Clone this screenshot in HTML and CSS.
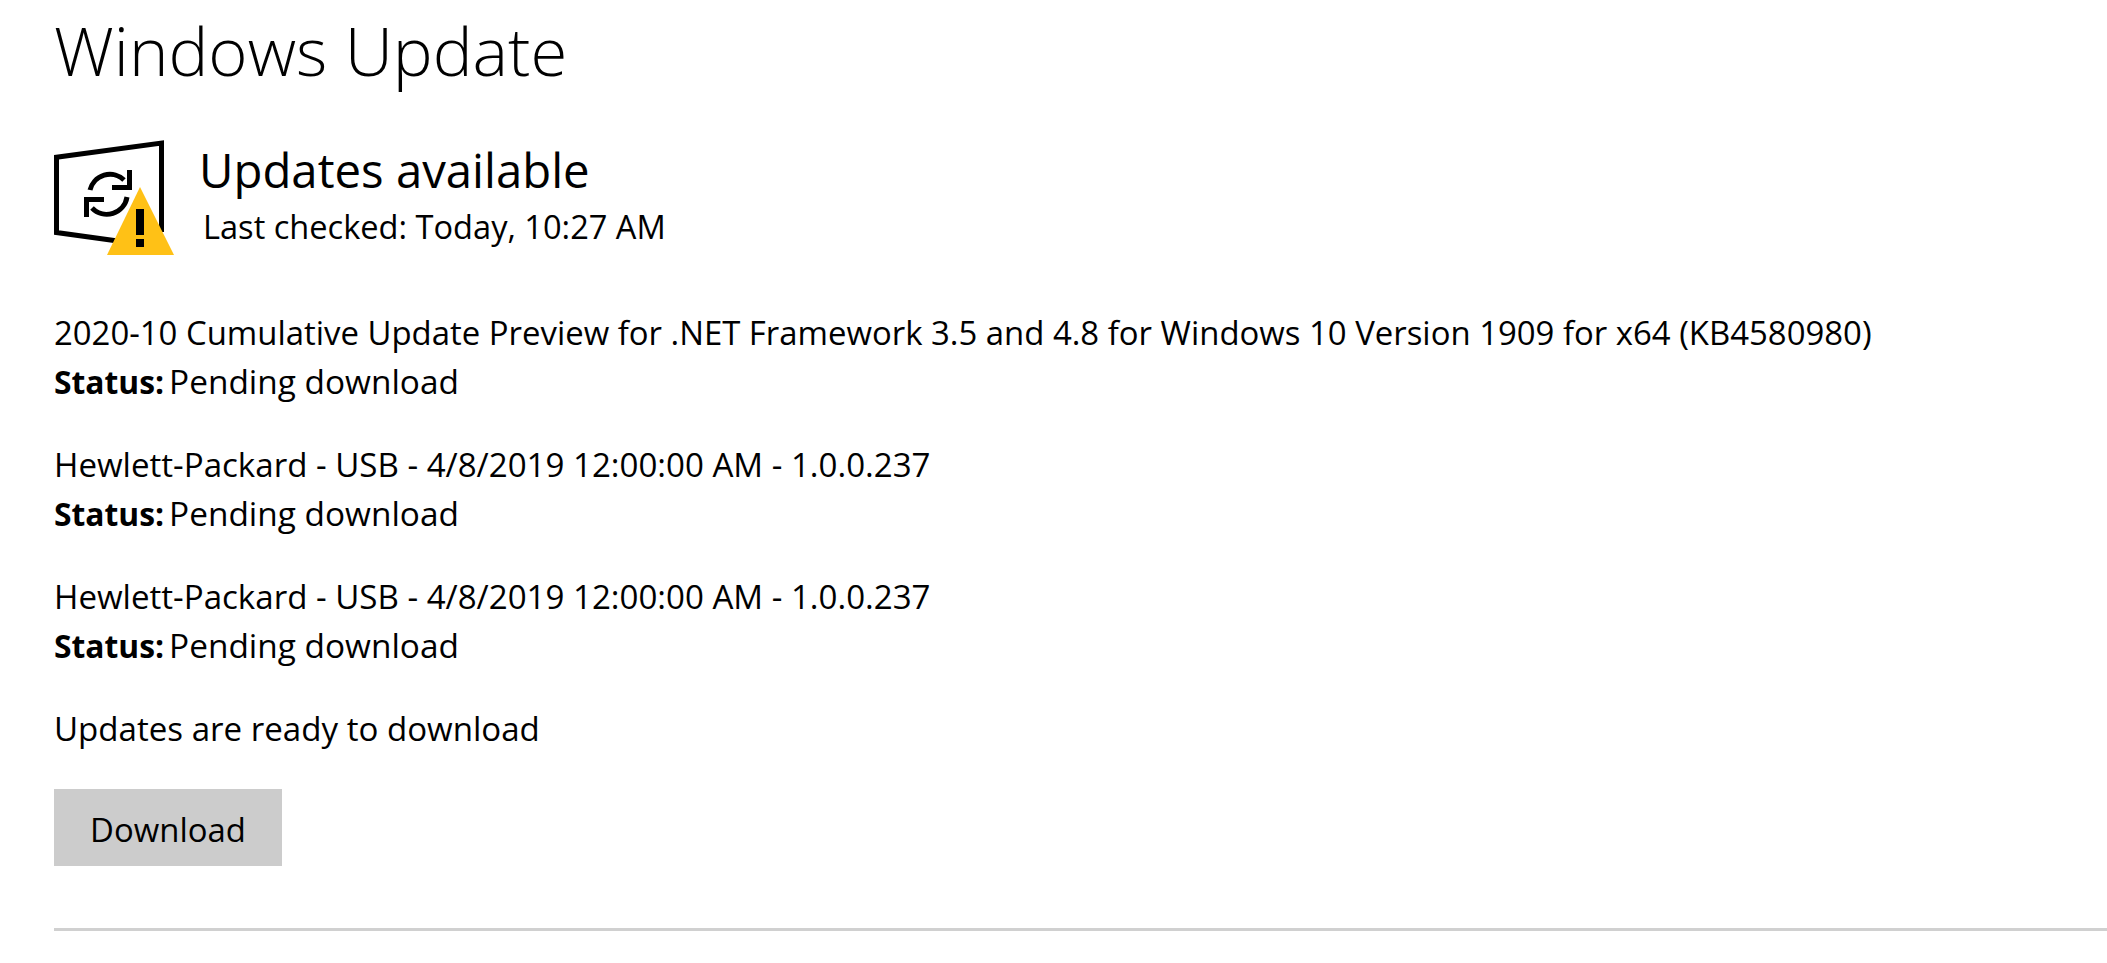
FILE: index.html
```html
<!DOCTYPE html>
<html lang="en">
<head>
<meta charset="utf-8">
<title>Windows Update</title>
<link rel="stylesheet" href="styles.css">
</head>
<body>
<main class="page">
  <h1 class="title">Windows Update</h1>
  <section class="summary">
    <svg class="icon" width="124" height="124" viewBox="54 138 124 124" aria-hidden="true">
      <path d="M125 242 L56.500 232.500 V157.200 L161.500 143 V232" fill="none" stroke="#000" stroke-width="5"/>
      <path d="M90 190 A20.500 20.500 0 0 1 124 180" fill="none" stroke="#000" stroke-width="5"/>
      <path d="M129.500 170 V187.500 H112" fill="none" stroke="#000" stroke-width="5"/>
      <path d="M127 197 A20.500 20.500 0 0 1 92 208" fill="none" stroke="#000" stroke-width="5"/>
      <path d="M86.500 217 V199.500 H104" fill="none" stroke="#000" stroke-width="5"/>
      <polygon points="140,187 174,255 107,255" fill="#ffc116"/>
      <rect x="136" y="209" width="8" height="26" fill="#000"/>
      <rect x="136" y="239" width="8" height="8" fill="#000"/>
    </svg>
    <div class="summary-text">
      <h2 class="heading">Updates available</h2>
      <p class="checked">Last checked: Today, 10:27 AM</p>
    </div>
  </section>
  <ul class="updates">
    <li class="update">
      <div>2020-10 Cumulative Update Preview for .NET Framework 3.5 and 4.8 for Windows 10 Version 1909 for x64 (KB4580980)</div>
      <div class="status"><b class="label">Status:</b>Pending download</div>
    </li>
    <li class="update">
      <div class="driver">Hewlett-Packard - USB - 4/8/2019 12:00:00 AM - 1.0.0.237</div>
      <div class="status"><b class="label">Status:</b>Pending download</div>
    </li>
    <li class="update">
      <div class="driver">Hewlett-Packard - USB - 4/8/2019 12:00:00 AM - 1.0.0.237</div>
      <div class="status"><b class="label">Status:</b>Pending download</div>
    </li>
  </ul>
  <p class="ready">Updates are ready to download</p>
  <button class="download" type="button">Download</button>
  <hr class="rule">
</main>
</body>
</html>
```
FILE: styles.css
```css
html, body {
  margin: 0;
  background: #fff;
  overflow: hidden;
}
body {
  font-family: "Open Sans", "Liberation Sans", sans-serif;
  font-size: 32.9px;
  line-height: 48px;
  color: #000;
}
.page {
  padding: 0 0 0 54px;
  height: 963px;
  box-sizing: border-box;
}
.title {
  margin: 0;
  padding-top: 10px;
  height: 85px;
  font-size: 67px;
  line-height: 80px;
  font-weight: 300;
}
.summary {
  display: flex;
  margin-top: 43px;
  height: 124px;
}
.icon {
  flex: none;
}
.summary-text {
  margin-left: 21px;
}
.heading {
  margin: 0;
  font-size: 47.300px;
  line-height: 64px;
  font-weight: 400;
}
.checked {
  margin: 0 0 0 4px;
  font-size: 32.600px;
  line-height: 50px;
}
.updates {
  list-style: none;
  margin: 47px 0 0;
  padding: 0;
}
.update {
  margin-bottom: 36px;
}
.driver {
  font-size: 33.100px;
}
.status {
  font-size: 33.400px;
}
.label {
  font-size: 31.800px;
  line-height: 1;
  font-weight: 700;
  margin-right: 5px;
}
.ready {
  margin: 1px 0 0;
  font-size: 33.100px;
}
.download {
  display: block;
  margin: 36px 0 0;
  width: 228px;
  height: 77px;
  border: 0;
  background: #ccc;
  color: #000;
  font: inherit;
  padding: 4px 0 0;
}
.rule {
  margin: 62px 0 0;
  height: 3px;
  border: 0;
  background: #d0d0d0;
}
```
